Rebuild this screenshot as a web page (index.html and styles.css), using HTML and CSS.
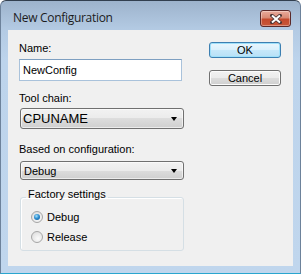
FILE: index.html
```html
<!DOCTYPE html>
<html lang="en">
<head>
    <meta charset="UTF-8">
    <title>New Configuration</title>
    <link rel="stylesheet" href="styles.css">
</head>
<body>
    <div class="window">
        <!-- Title bar -->
        <div class="titlebar">
            <span class="title">New Configuration</span>
            <button class="close-btn" title="Close">
                <svg width="12" height="10" viewBox="0 0 12 10">
                    <path d="M2 1.5 L10 8.5 M10 1.5 L2 8.5" stroke="#4b3434" stroke-width="3.6" stroke-linecap="square"/>
                    <path d="M2 1.5 L10 8.5 M10 1.5 L2 8.5" stroke="#fff" stroke-width="2"/>
                </svg>
            </button>
        </div>

        <!-- Dialog body -->
        <div class="client">
            <div class="form">
                <label class="field-label name-label">Name:</label>
                <input class="text-input" type="text" value="NewConfig">

                <label class="field-label">Tool chain:</label>
                <div class="combo combo-large">
                    <span>CPUNAME</span>
                    <span class="arrow"></span>
                </div>

                <label class="field-label based-label">Based on configuration:</label>
                <div class="combo combo-small">
                    <span>Debug</span>
                    <span class="arrow"></span>
                </div>

                <fieldset class="group">
                    <legend>Factory settings</legend>
                    <label class="radio"><span class="radio-dot checked"></span>Debug</label>
                    <label class="radio"><span class="radio-dot"></span>Release</label>
                </fieldset>
            </div>

            <div class="actions">
                <button class="btn btn-default">OK</button>
                <button class="btn">Cancel</button>
            </div>
        </div>
    </div>
</body>
</html>
```

FILE: styles.css
```css
body {
    margin: 0;
    font-family: "Liberation Sans", Arial, sans-serif;
    font-size: 11px;
    color: #000;
}

.window {
    width: 301px;
    height: 274px;
    box-sizing: border-box;
    display: flex;
    flex-direction: column;
    border: 1px solid #6d829b;
    border-top-color: #323f4f;
    border-bottom-color: #29a6cf;
    border-radius: 6px 6px 0 0;
    background: linear-gradient(#9db3cc 0, #b3cae3 28px, #bdd4ec 60px, #c0d6ed 100%);
}

.titlebar {
    height: 29px;
    display: flex;
    align-items: flex-start;
    justify-content: space-between;
}

.title {
    font-family: "Open Sans", "Noto Sans", sans-serif;
    font-size: 12px;
    line-height: 16px;
    letter-spacing: -0.3px;
    color: #1c1c1c;
    margin: 9px 0 0 12px;
}

.close-btn {
    width: 31px;
    height: 17px;
    margin: 9px 9px 0 0;
    padding: 0;
    border: 1px solid #5b2a2a;
    border-radius: 3px;
    background: linear-gradient(#e9ab9c 0%, #d88a75 45%, #c44a2e 55%, #c9583a 100%);
    box-shadow: inset 0 0 0 1px rgba(255, 255, 255, 0.35);
    display: flex;
    align-items: center;
    justify-content: center;
}

.client {
    height: 236px;
    margin: 0 7px;
    background: #f0f0f0;
    display: flex;
    justify-content: space-between;
    padding: 12px 12px 0 11px;
    box-sizing: border-box;
}

.form {
    width: 165px;
    display: flex;
    flex-direction: column;
    align-items: flex-start;
}

.field-label {
    line-height: 13px;
    margin: 11px 0 3px;
}

.name-label {
    margin: 0 0 4px;
}

.based-label {
    margin: 14px 0 5px;
}

.text-input {
    width: 163px;
    height: 22px;
    box-sizing: border-box;
    margin: 0;
    padding: 0 3px;
    border: 1px solid #a9c2db;
    border-top-color: #7e9fc1;
    font-family: "Liberation Sans", Arial, sans-serif;
    font-size: 11px;
    background: #fff;
    outline: none;
}

.combo {
    width: 164px;
    margin-left: 1px;
    box-sizing: border-box;
    display: flex;
    align-items: center;
    justify-content: space-between;
    padding: 0 6px 0 3px;
    border: 1px solid #707070;
    border-radius: 3px;
    background: linear-gradient(#f2f2f2 0%, #ebebeb 50%, #dddddd 50%, #cfcfcf 100%);
    box-shadow: inset 0 0 0 1px rgba(255, 255, 255, 0.6);
}

.combo-large {
    height: 21px;
    font-size: 13px;
    padding-left: 2px;
}

.combo-small {
    height: 19px;
}

.arrow {
    width: 0;
    height: 0;
    border-left: 3.5px solid transparent;
    border-right: 3.5px solid transparent;
    border-top: 4px solid #000;
}

.group {
    width: 164px;
    box-sizing: border-box;
    margin: 8px 0 0 1px;
    padding: 0 0 3px 5px;
    border: 1px solid #d5dfe5;
    border-radius: 3px;
    box-shadow: inset 1px 1px 0 #fff;
}

.group legend {
    padding: 0 2px 6px;
    line-height: 13px;
}

.radio {
    display: flex;
    align-items: center;
    gap: 4px;
    height: 20px;
    margin-left: 5px;
}

.radio-dot {
    width: 12px;
    height: 12px;
    box-sizing: border-box;
    border-radius: 50%;
    border: 1px solid #a6a6a6;
    background: radial-gradient(circle at 60% 65%, #fbfbfb 0%, #e8e8e8 55%, #d6d6d6 100%);
    position: relative;
}

.radio-dot.checked::after {
    content: "";
    position: absolute;
    left: 2px;
    top: 2px;
    width: 6px;
    height: 6px;
    border-radius: 50%;
    background: radial-gradient(circle at 40% 35%, #a9e3fb 0%, #2e8fd1 45%, #0b4f8f 100%);
}

.actions {
    width: 72px;
    display: flex;
    flex-direction: column;
    gap: 12px;
}

.btn {
    height: 16px;
    padding: 0;
    border: 1px solid #707070;
    border-radius: 3px;
    font-family: "Liberation Sans", Arial, sans-serif;
    font-size: 11px;
    line-height: 13px;
    color: #000;
    background: linear-gradient(#f2f2f2 0%, #ebebeb 50%, #dddddd 50%, #cfcfcf 100%);
    box-shadow: inset 0 0 0 1px #fcfcfc;
}

.btn-default {
    border-color: #3c7fb1;
    background: linear-gradient(#eaf6fd 0%, #d9f0fc 50%, #c6e8fa 50%, #b7e0f6 100%);
    box-shadow: inset 0 0 0 1px #9ee0fa;
}
```
